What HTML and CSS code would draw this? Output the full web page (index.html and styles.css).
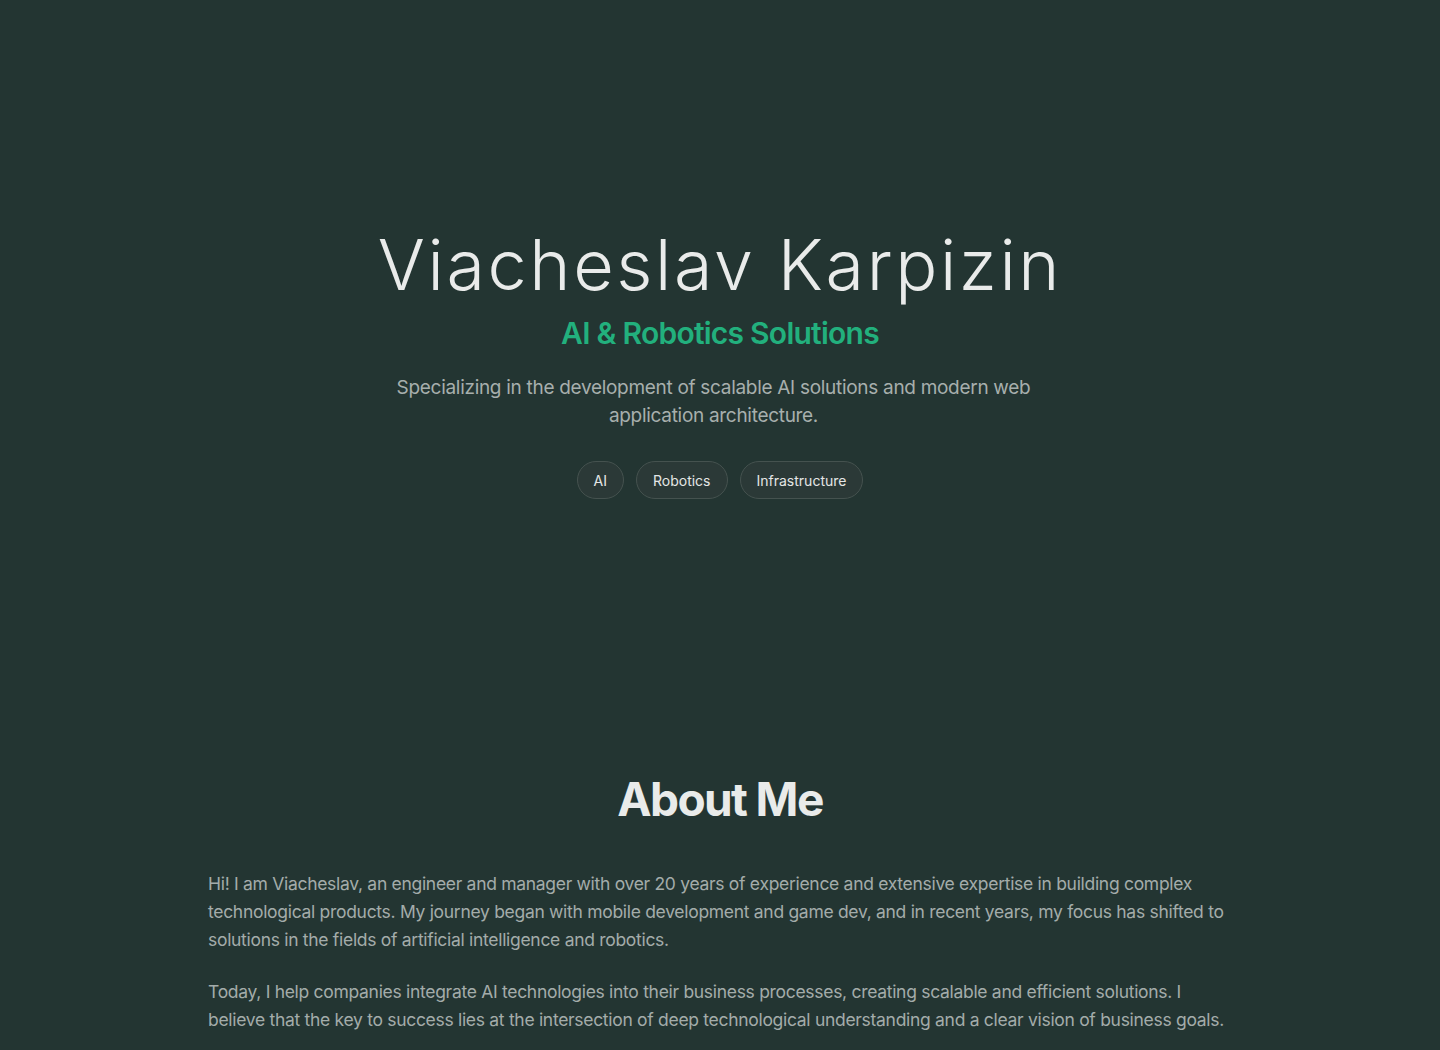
FILE: index.html
```html
<!DOCTYPE html>
<html lang="en">
<head>
<meta charset="utf-8">
<title>Viacheslav Karpizin</title>
<link rel="stylesheet" href="styles.css">
</head>
<body>
<main class="page">
  <section class="hero">
    <h1 class="hero-name">Viacheslav Karpizin</h1>
    <p class="hero-role">AI &amp; Robotics Solutions</p>
    <p class="hero-lead">Specializing in the development of scalable AI solutions and modern web application architecture.</p>
    <ul class="tags">
      <li class="tag">AI</li>
      <li class="tag">Robotics</li>
      <li class="tag">Infrastructure</li>
    </ul>
  </section>
  <section class="about">
    <h2 class="about-title">About Me</h2>
    <div class="about-body">
      <p>Hi! I am Viacheslav, an engineer and manager with over 20 years of experience and extensive expertise in building complex technological products. My journey began with mobile development and game dev, and in recent years, my focus has shifted to solutions in the fields of artificial intelligence and robotics.</p>
      <p>Today, I help companies integrate AI technologies into their business processes, creating scalable and efficient solutions. I believe that the key to success lies at the intersection of deep technological understanding and a clear vision of business goals.</p>
    </div>
  </section>
</main>
</body>
</html>
```

FILE: styles.css
```css
* { box-sizing: border-box; }

html, body {
  margin: 0;
  padding: 0;
  background: #233532;
}

body {
  font-family: Inter, "Noto Sans", sans-serif;
  color: #e6e8e7;
  overflow: hidden;
}

.page {
  display: flex;
  flex-direction: column;
}

.hero {
  min-height: 730px;
  display: flex;
  flex-direction: column;
  align-items: center;
  justify-content: center;
  text-align: center;
  padding: 0 24px 6px;
}

.hero-name {
  margin: 0;
  font-family: Inter, sans-serif;
  font-weight: 350;
  font-size: 70px;
  line-height: 80px;
  letter-spacing: 2.6px;
  color: #e9ebea;
}

.hero-role {
  margin: 10px 0 0;
  font-weight: 600;
  font-size: 30px;
  line-height: 36px;
  letter-spacing: -0.75px;
  color: #22b07d;
}

.hero-lead {
  margin: 23px 0 0;
  max-width: 660px;
  padding-right: 13px;
  font-size: 19px;
  line-height: 28px;
  letter-spacing: -0.3px;
  color: #a7afad;
}

.tags {
  list-style: none;
  display: flex;
  gap: 12px;
  margin: 31px 0 0;
  padding: 0;
}

.tag {
  height: 38px;
  display: flex;
  align-items: center;
  padding: 0 16px;
  border-radius: 19px;
  border: 1px solid #45524f;
  background: #2b3937;
  font-size: 14px;
  color: #e4e6e5;
}

.about {
  display: flex;
  flex-direction: column;
  align-items: center;
  padding: 41px 0 0;
}

.about-title {
  margin: 0;
  font-weight: 700;
  font-size: 46px;
  line-height: 56px;
  letter-spacing: -1.6px;
  color: #e9ebea;
}

.about-body {
  width: 1024px;
  margin-top: 43px;
}

.about-body p {
  margin: 0 0 24px;
  font-size: 17.5px;
  line-height: 28px;
  letter-spacing: -0.3px;
  color: #a3acaa;
}
```
